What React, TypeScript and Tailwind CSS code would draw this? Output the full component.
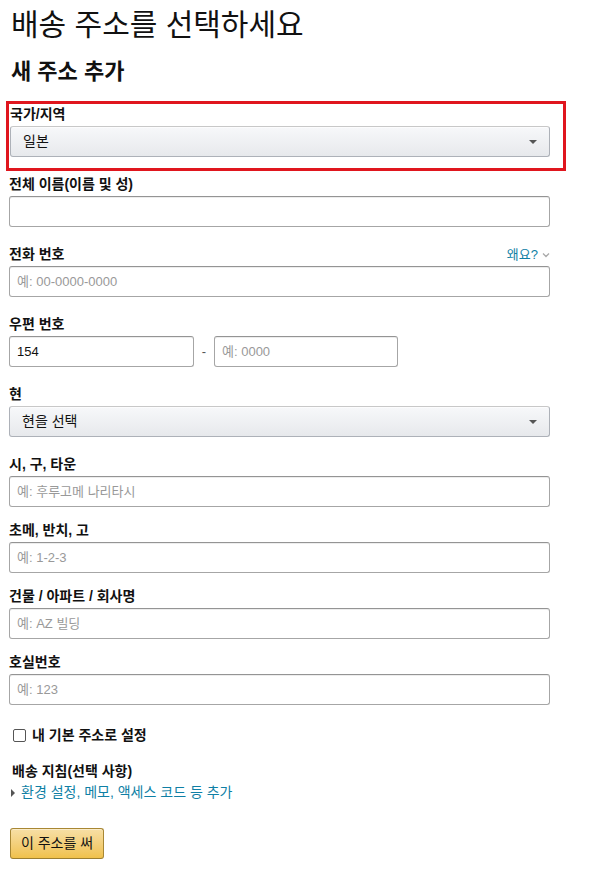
import React from 'react';

const font = { fontFamily: 'Arial, "Liberation Sans", "Noto Sans CJK KR", sans-serif' };

const Label: React.FC<{ children: React.ReactNode }> = ({ children }) => (
  <div className="text-[14px] font-bold leading-[19px] text-[#111] mb-[2px]">{children}</div>
);

const TextInput: React.FC<{ placeholder?: string; value?: string; className?: string }> = ({ placeholder, value, className }) => (
  <input
    readOnly
    value={value}
    placeholder={placeholder}
    className={`h-[31px] px-[7px] text-[13px] text-[#111] placeholder:text-[#999] bg-white border border-[#a6a6a6] border-t-[#949494] rounded-[3px] shadow-[0_1px_0_rgba(0,0,0,0.07)_inset] outline-none ${className ?? 'w-full'}`}
  />
);

const Select: React.FC<{ value: string }> = ({ value }) => (
  <div className="h-[31px] w-full flex items-center justify-between pl-[12px] pr-[12px] text-[14px] text-[#111] border border-[#adb1b8] border-t-[#c8c8c8] rounded-[3px] bg-gradient-to-b from-[#f7f8fa] to-[#e7e9ec] shadow-[0_1px_0_rgba(255,255,255,0.6)_inset]">
    <span>{value}</span>
    <span className="w-0 h-0 border-l-[4px] border-r-[4px] border-t-[4px] border-l-transparent border-r-transparent border-t-[#555]" />
  </div>
);

const App: React.FC = () => {
  return (
    <div className="w-[599px] h-[877px] bg-white" style={font}>
      <div className="pl-[9px] pt-[8px]">
        <h1 className="text-[30px] font-normal leading-[34px] text-[#111] ml-[2px]">배송 주소를 선택하세요</h1>
        <h2 className="text-[22px] font-bold leading-[26px] text-[#111] mt-[17px] ml-[2px]">새 주소 추가</h2>

        <div className="w-[560px] -ml-[3px] mt-[16px] border-[3px] border-[#e0161e] pl-[1px] pr-[13px] pt-[1px] pb-[11px]">
          <Label>국가/지역</Label>
          <Select value="일본" />
        </div>

        <div className="w-[541px]">
          <div className="mt-[4px]">
            <Label>전체 이름(이름 및 성)</Label>
            <TextInput />
          </div>

          <div className="mt-[18px]">
            <div className="flex justify-between items-end">
              <Label>전화 번호</Label>
              <div className="flex items-center gap-[4px] mb-[2px] text-[13px] leading-[19px] text-[#0f7fa5]">
                <span>왜요?</span>
                <svg width="8" height="6" viewBox="0 0 8 6" className="mt-[1px]">
                  <path d="M1 1.5 L4 4.5 L7 1.5" fill="none" stroke="#aaa" strokeWidth="1.3" />
                </svg>
              </div>
            </div>
            <TextInput placeholder="예: 00-0000-0000" />
          </div>

          <div className="mt-[18px]">
            <Label>우편 번호</Label>
            <div className="flex items-center">
              <TextInput value="154" className="w-[185px]" />
              <span className="w-[20px] text-center text-[13px] text-[#555]">-</span>
              <TextInput placeholder="예: 0000" className="w-[184px]" />
            </div>
          </div>

          <div className="mt-[18px]">
            <Label>현</Label>
            <Select value="현을 선택" />
          </div>

          <div className="mt-[18px]">
            <Label>시, 구, 타운</Label>
            <TextInput placeholder="예: 후루고메 나리타시" />
          </div>

          <div className="mt-[14px]">
            <Label>초메, 반치, 고</Label>
            <TextInput placeholder="예: 1-2-3" />
          </div>

          <div className="mt-[14px]">
            <Label>건물 / 아파트 / 회사명</Label>
            <TextInput placeholder="예: AZ 빌딩" />
          </div>

          <div className="mt-[14px]">
            <Label>호실번호</Label>
            <TextInput placeholder="예: 123" />
          </div>

          <label className="flex items-center gap-[6px] mt-[21px] ml-[4px] text-[14px] font-bold leading-[19px] text-[#111]">
            <span className="w-[13px] h-[13px] border border-[#555] rounded-[2px] bg-white" />
            내 기본 주소로 설정
          </label>

          <div className="mt-[17px] ml-[3px] text-[14px] font-bold leading-[19px] text-[#111]">배송 지침(선택 사항)</div>
          <div className="flex items-center gap-[6px] ml-[2px] mt-[2px] text-[14px] leading-[19px] text-[#0f7fa5]">
            <span className="w-0 h-0 border-t-[4px] border-b-[4px] border-l-[4px] border-t-transparent border-b-transparent border-l-[#555]" />
            <span>환경 설정, 메모, 액세스 코드 등 추가</span>
          </div>

          <button className="mt-[26px] ml-[1px] h-[31px] w-[94px] text-[14px] text-[#111] border border-[#a88734] border-b-[#9c7e31] rounded-[3px] bg-gradient-to-b from-[#f7dfa5] to-[#f0c14b] shadow-[0_1px_0_rgba(255,255,255,0.4)_inset]">
            이 주소를 써
          </button>
        </div>
      </div>
    </div>
  );
};

export default App;
